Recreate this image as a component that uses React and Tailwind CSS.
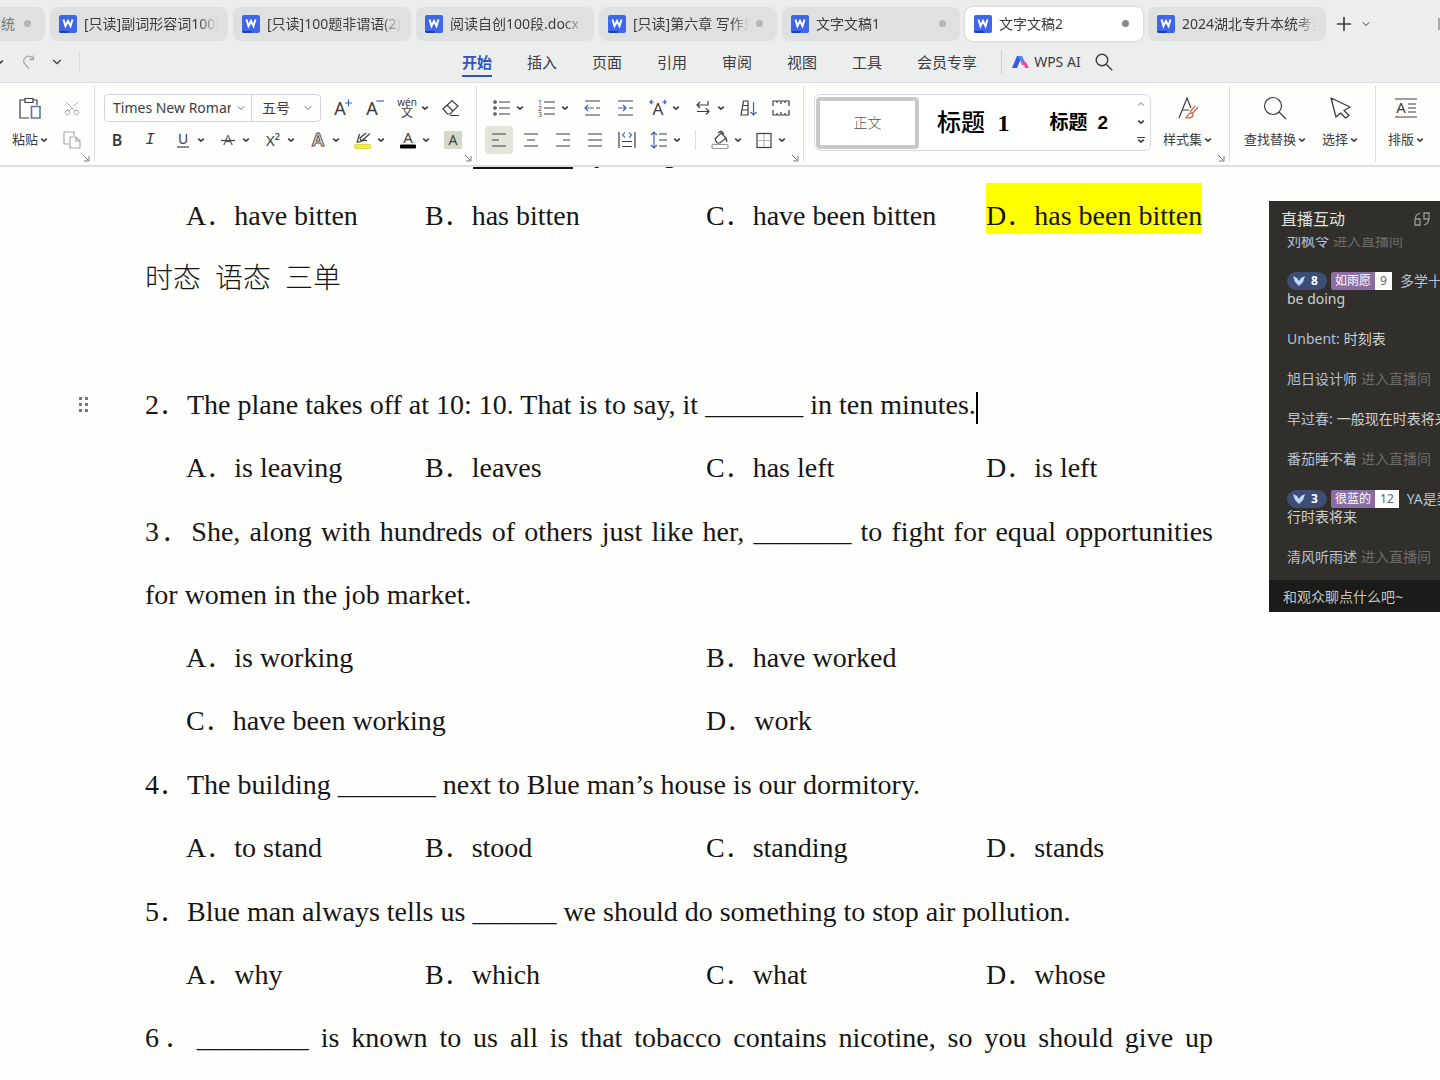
import React from 'react';
import { ChevronDown, Plus, Search, Scissors } from 'lucide-react';
import clsx from 'clsx';

const tabs = [
  { title: '[只读]副词形容词100题' },
  { title: '[只读]100题非谓语(2)' },
  { title: '阅读自创100段.docx' },
  { title: '[只读]第六章 写作思路', dirty: true },
  { title: '文字文稿1', dirty: true },
  { title: '文字文稿2', dirty: true, active: true },
  { title: '2024湖北专升本统考英语' },
];

const menus = ['开始', '插入', '页面', '引用', '审阅', '视图', '工具', '会员专享'];

const questions = [
  {
    text: '2．The plane takes off at 10: 10. That is to say, it _______ in ten minutes.',
    options: ['A．is leaving', 'B．leaves', 'C．has left', 'D．is left'],
    current: true,
  },
  {
    text: '3．She, along with hundreds of others just like her, _______ to fight for equal opportunities for women in the job market.',
    options: ['A．is working', 'B．have worked', 'C．have been working', 'D．work'],
    wide: true,
  },
  {
    text: '4．The building _______ next to Blue man’s house is our dormitory.',
    options: ['A．to stand', 'B．stood', 'C．standing', 'D．stands'],
  },
  {
    text: '5．Blue man always tells us ______ we should do something to stop air pollution.',
    options: ['A．why', 'B．which', 'C．what', 'D．whose'],
  },
];

const messages = [
  { name: '刘枫令', enter: true },
  { level: 8, fan: '如雨愿', fanLevel: 9, name: '多学十', body: 'be doing' },
  { name: 'Unbent:', text: '时刻表' },
  { name: '旭日设计师', enter: true },
  { name: '早过春:', text: '一般现在时表将来' },
  { name: '番茄睡不着', enter: true },
  { level: 3, fan: '很蓝的', fanLevel: 12, name: 'YA是梨', body: '行时表将来' },
  { name: '清风听雨述', enter: true },
];

const Caret = ({ className }) => (
  <svg viewBox="0 0 8 6" className={clsx('w-2 h-1.5 shrink-0', className)} fill="none" stroke="currentColor" strokeWidth="1.6">
    <path d="M1.2 1.6 4 4.2 6.800 1.6" />
  </svg>
);

const Icon = ({ children, className }) => (
  <svg viewBox="0 0 20 20" className={clsx('w-5 h-5 shrink-0', className)} fill="none" stroke="currentColor" strokeWidth="1.2">
    {children}
  </svg>
);

const Letter = ({ x = 10, y = 16, size = 16, children, ...rest }) => (
  <text x={x} y={y} fontSize={size} textAnchor="middle" fill="currentColor" stroke="none" {...rest}>{children}</text>
);

const Tool = ({ label, caret, on, children }) => (
  <button aria-label={label} className="flex items-center gap-1 h-8 relative">
    {on && <span className="absolute -inset-x-1 inset-y-0.5 rounded-sm bg-[#e3e5da]"></span>}
    <span className="relative flex w-5 justify-center">{children}</span>
    {caret && <Caret />}
  </button>
);

const BigTool = ({ label, icon }) => (
  <button className="flex flex-col items-center shrink-0">
    <span className="h-8 flex items-center">{icon}</span>
    <span className="h-8 flex items-center gap-0.5 text-[13px] whitespace-nowrap">{label}<Caret /></span>
  </button>
);

const Launcher = () => (
  <button aria-label="更多设置" className="absolute right-1 bottom-0 text-[#777]">
    <svg viewBox="0 0 8 8" className="w-2 h-2" fill="none" stroke="currentColor" strokeWidth="1"><path d="M1 1l5 5M7 2v5H2" /></svg>
  </button>
);

const Group = ({ className, children }) => (
  <div className={clsx('relative shrink-0 border-r border-[#dedee0] pt-1.5 my-[3px]', className)}>{children}</div>
);

const WLogo = () => (
  <svg viewBox="0 0 18 18" className="w-[18px] h-[18px] shrink-0" aria-hidden="true">
    <rect width="18" height="18" rx="2" fill="#3f66e8" />
    <path d="M0 16h10l-1 2H2a2 2 0 0 1-2-2z" fill="#1c3fae" />
    <path d="M4.500 4.500 6.500 11 9 6l2.500 5L13.500 4.500" fill="none" stroke="#fff" strokeWidth="2" />
  </svg>
);

const Tab = ({ title, dirty, active }) => (
  <button className={clsx('flex items-center h-[34px] w-[178px] shrink-0 rounded-lg pl-[9px] text-sm', active ? 'bg-white shadow-[0_0_2px_1px_#d8d8dc]' : 'bg-[#dfe0e0]')}>
    <WLogo />
    <span className={clsx('ml-[7px] text-left whitespace-nowrap overflow-hidden [mask-image:linear-gradient(to_right,black_85%,transparent)]', dirty ? 'w-[116px]' : 'w-[134px]')}>{title}</span>
    {dirty && <span className={clsx('ml-[7px] w-[7px] h-[7px] rounded-full', active ? 'bg-[#8a8a8a]' : 'bg-[#b5b5b8]')}></span>}
  </button>
);

const TabBar = () => (
  <div className="flex items-center gap-[5px] h-[47px] overflow-hidden">
    <button className="flex items-center justify-end h-[34px] w-[45px] shrink-0 overflow-hidden rounded-r-lg bg-[#dfe0e0] pr-[14px] text-sm whitespace-nowrap text-[#777]">
      本统<span className="ml-[9px] w-[7px] h-[7px] shrink-0 rounded-full bg-[#b5b5b8]"></span>
    </button>
    {tabs.map((t) => <Tab key={t.title} {...t} />)}
    <button aria-label="新建" className="ml-0.5 shrink-0"><Plus size={22} strokeWidth={1.8} /></button>
    <button aria-label="标签列表" className="shrink-0"><ChevronDown size={12} /></button>
    <span className="ml-auto w-0.5 h-3 bg-[#aaa]"></span>
  </div>
);

const MenuBar = () => (
  <div className="flex items-center h-9 pb-[5px] text-[15px] border-b border-[#dcdcde]">
    <div className="flex items-center w-[462px] shrink-0">
      <Caret className="-ml-1" />
      <button aria-label="重做" className="ml-[17px] text-[#aaa]">
        <svg viewBox="0 0 14 16" className="w-3.5 h-4" fill="none" stroke="currentColor" strokeWidth="1.3"><path d="M12.5 1.5v4H8.5M12.3 5.3A5 5 0 1 0 3 9l5 5.5" /></svg>
      </button>
      <button aria-label="更多" className="ml-[15px]"><ChevronDown size={14} /></button>
      <span className="ml-[15px] w-px h-5 bg-[#dcdce0]"></span>
    </div>
    <nav className="flex gap-[35px] shrink-0">
      {menus.map((m, i) => (
        <button key={m} className={clsx('relative whitespace-nowrap', i === 0 && 'font-bold text-[#3553b5]')}>
          {m}
          {i === 0 && <span className="absolute inset-x-0 -bottom-1 h-0.5 bg-[#3553b5]"></span>}
        </button>
      ))}
    </nav>
    <span className="ml-6 mr-2.5 w-px h-6 bg-[#cfcfd2]"></span>
    <button className="flex items-center gap-1 text-sm whitespace-nowrap">
      <svg viewBox="0 0 18 14" className="w-[18px] h-3.5" aria-hidden="true">
        <path d="M0 13 5 1h5L5 13z" fill="#3a5be0" />
        <path d="M6 1h4l3 6H9z" fill="#4b8df0" />
        <path d="M9 7h5l3 6h-4l-1-3h-2z" fill="#e84f98" />
      </svg>
      WPS AI
    </button>
    <button aria-label="搜索" className="ml-3.5">
      <svg viewBox="0 0 18 18" className="w-[18px] h-[18px]" fill="none" stroke="currentColor" strokeWidth="1.4"><circle cx="7" cy="7" r="5.800" /><path d="m11.200 11.200 6 6" /></svg>
    </button>
  </div>
);

const FontGroup = () => (
  <Group className="w-[382px]">
    <div className="flex items-center gap-3 h-8 pl-[9px]">
      <div className="flex h-7 w-[217px] border border-[#d4d4d8] rounded-[4px] text-sm">
        <label className="relative flex w-[147px] items-center border-r border-[#d4d4d8]">
          <select aria-label="字体" className="appearance-none w-full pl-2 pr-5 outline-none text-sm">
            <option>Times New Romar</option>
          </select>
          <ChevronDown size={12} strokeWidth={1.5} className="absolute right-1 pointer-events-none" />
        </label>
        <label className="relative flex flex-1 items-center">
          <select aria-label="字号" className="appearance-none w-full pl-2.5 outline-none text-sm">
            <option>五号</option>
          </select>
          <ChevronDown size={12} strokeWidth={1.5} className="absolute right-1.5 pointer-events-none" />
        </label>
      </div>
      <Tool label="增大字号"><Icon><Letter x={7} y={17} size={18}>A</Letter><path d="M12 5h7M15.500 1.500v7" stroke="#3b62c9" /></Icon></Tool>
      <Tool label="减小字号"><Icon><Letter x={7} y={17} size={18}>A</Letter><path d="M11.500 3h7.500" stroke="#3b62c9" /></Icon></Tool>
      <Tool label="拼音指南" caret><Icon className="overflow-visible"><Letter y={8} size={10}>wén</Letter><Letter y={19} size={12}>文</Letter></Icon></Tool>
      <Tool label="清除格式"><Icon><path d="M2 11 11 2.5l6 5.5-8 8H6.5zM6 7l6 6M9 17.5h9" /></Icon></Tool>
    </div>
    <div className="flex items-center gap-[13px] h-8 pl-3">
      <Tool label="加粗"><span className="text-base font-semibold">B</span></Tool>
      <Tool label="倾斜"><span className="text-base italic font-['Liberation_Mono']">I</span></Tool>
      <Tool label="下划线" caret><Icon><Letter y={14} size={14}>U</Letter><path d="M4 17h12" /></Icon></Tool>
      <Tool label="删除线" caret><Icon><Letter y={15} size={15} opacity="0.75">A</Letter><path d="M3 10.5h14" /></Icon></Tool>
      <Tool label="上标" caret><span className="text-[15px]">X²</span></Tool>
      <Tool label="文字效果" caret><Icon><text x="10" y="16" fontSize="18" fontWeight="600" textAnchor="middle" fill="#f6e2da" stroke="#555" strokeWidth="1">A</text></Icon></Tool>
      <Tool label="突出显示" caret><Icon><path d="M4 12.500 6.500 4M4 12.500l4-1 9-8M8 11l-1-3 6-5M9 11l3-1 2 1" /><rect x="1.5" y="14.5" width="16" height="4" rx="1" fill="#f7f021" stroke="#c7c233" strokeWidth="0.6" /></Icon></Tool>
      <Tool label="字体颜色" caret><Icon><Letter y={13} size={15}>A</Letter><rect x="2" y="14.5" width="16" height="4" rx="1" fill="#000" stroke="none" /></Icon></Tool>
      <Tool label="字符底纹"><span className="w-[18px] h-[18px] bg-[#d3d8cb] text-sm leading-[18px]">A</span></Tool>
    </div>
    <Launcher />
  </Group>
);

const ParagraphGroup = () => (
  <Group className="w-[327px]">
    <div className="flex items-center gap-[13px] h-8 pl-[15px]">
      <Tool label="项目符号" caret><Icon><path d="M7 4h11M7 10h11M7 16h11" /><circle cx="3" cy="4" r="1.2" /><circle cx="3" cy="10" r="1.2" /><circle cx="3" cy="16" r="1.2" /></Icon></Tool>
      <Tool label="编号" caret><Icon><path d="M7 4h11M7 10h11M7 16h11" /><Letter x={3} y={6.5} size={7}>1</Letter><Letter x={3} y={12.5} size={7}>2</Letter><Letter x={3} y={18.5} size={7}>3</Letter></Icon></Tool>
      <Tool label="减少缩进"><Icon><path d="M3 3h15M3 17h15M14 10h4" /><path d="M12 10H3M6 7l-3 3 3 3" stroke="#3b62c9" /></Icon></Tool>
      <Tool label="增加缩进"><Icon><path d="M3 3h15M3 17h15M14 10h4" /><path d="M3 10h8M8 7l3 3-3 3" stroke="#3b62c9" /></Icon></Tool>
      <Tool label="字符缩放" caret><Icon><Letter y={17} size={17}>A</Letter><path d="M6 4H2M4 2 2 4l2 2M14 4h4M16 2l2 2-2 2" stroke="#3b62c9" /></Icon></Tool>
      <Tool label="换行符" caret><Icon><path d="M15 3v4H4M7 4 4 7l3 3M4 13.5h12M13 10.5l3 3-3 3" /></Icon></Tool>
      <Tool label="排序"><Icon><path d="M3 17 5.500 3H10v14zM4 12h6M5 7.500h5" /><path d="M15.500 4v13M12.500 14l3 3 3-3" stroke="#3b62c9" /></Icon></Tool>
      <Tool label="制表位"><Icon><path d="M2 8V3h16v5M2 12v5h16v-5M6 3v2M10 3v3M14 3v2M6 17v-2M10 17v-3M14 17v-2" /></Icon></Tool>
    </div>
    <div className="flex items-center gap-3 h-8 pl-3">
      <Tool label="左对齐" on><Icon><path d="M3 4h14M3 10h7M3 16h14" /></Icon></Tool>
      <Tool label="居中"><Icon><path d="M3 4h14M6 10h8M3 16h14" /></Icon></Tool>
      <Tool label="右对齐"><Icon><path d="M3 4h14M10 10h7M3 16h14" /></Icon></Tool>
      <Tool label="两端对齐"><Icon><path d="M3 4h14M3 10h14M3 16h14" /></Icon></Tool>
      <Tool label="分散对齐"><Icon><path d="M2 2v16M18 2v16M5 11.500h10M5 16.500h10" /><path d="M8 2.500 5.500 5 8 7.500M12 2.500 14.500 5 12 7.500" stroke="#5a6fb0" /></Icon></Tool>
      <Tool label="行距" caret><Icon><path d="M10 4h8M10 10h8M10 16h8" /><path d="M5 2v16M2 5l3-3 3 3M2 15l3 3 3-3" stroke="#3b62c9" /></Icon></Tool>
      <span className="mx-0.5 w-px h-5 bg-[#dedee0]"></span>
      <Tool label="底纹" caret><Icon><path d="M5 9 11 3l5 5-6 5H7zM8 3l3-2 3 3M16 8l1 4" /><rect x="2" y="14.500" width="16" height="4" rx="1" stroke="#999" /></Icon></Tool>
      <Tool label="边框" caret><Icon><rect x="3" y="3.500" width="14" height="14" /><path d="M10 4v13M3.500 10.500h13" stroke="#bbb" /></Icon></Tool>
    </div>
    <Launcher />
  </Group>
);

const StyleGroup = () => (
  <Group className="flex w-[426px]">
    <div className="flex items-center h-[57px] w-[337px] mt-0.5 ml-2.5 border border-[#dadade] rounded-md bg-white">
      <button className="ml-px w-[103px] h-[52px] shrink-0 border-4 border-[#c9c9cb] rounded-[4px] text-sm font-light text-[#555]">正文</button>
      <button className="ml-[18px] text-2xl font-medium whitespace-nowrap text-black">标题&nbsp; <span className="font-['Liberation_Serif'] font-bold">1</span></button>
      <button className="ml-10 text-[19px] font-bold whitespace-nowrap text-black">标题&nbsp; <span className="font-['Liberation_Sans']">2</span></button>
      <div className="ml-auto mr-[5px] flex flex-col gap-3">
        <button aria-label="上一行" className="rotate-180 text-[#bbb]"><Caret /></button>
        <button aria-label="下一行"><Caret /></button>
        <button aria-label="展开样式" className="border-t border-current"><Caret /></button>
      </div>
    </div>
    <div className="ml-3">
      <BigTool label="样式集" icon={
        <svg viewBox="0 0 24 24" className="w-6 h-6" fill="none" stroke="currentColor" strokeWidth="1.2">
          <path d="M3 22 11 2l4 10M6 14h7" />
          <path d="m22 11-6 7M19 10l-5 6M16 17c-3-1-4 2-6 5 4 0 7 0 7-3z" stroke="#c8674a" />
        </svg>
      } />
    </div>
    <Launcher />
  </Group>
);

const Ribbon = () => (
  <div className="flex h-[84px] overflow-hidden bg-[#fefefd] border-b-2 border-[#dddde2]">
    <Group className="flex w-[95px] pl-3">
      <BigTool label="粘贴" icon={
        <svg viewBox="0 0 24 24" className="w-6 h-6" fill="none" stroke="currentColor" strokeWidth="1.2">
          <path d="M7 4H2v18h9M15 4h4v5M7 2.500h8v4H7z" />
          <path d="M13.500 10.500h8.500v11.500h-8.500z" stroke="#5873b5" strokeWidth="1.6" />
        </svg>
      } />
      <div className="ml-3.5 flex flex-col text-[#aaa]">
        <Tool label="剪切"><Scissors size={18} strokeWidth={1.2} className="-rotate-90" /></Tool>
        <Tool label="复制"><Icon><path d="M7 14H2V2h10v4M8 7h6l4 4v7H8zM14 7v4h4" /></Icon></Tool>
      </div>
      <Launcher />
    </Group>
    <FontGroup />
    <ParagraphGroup />
    <StyleGroup />
    <Group className="flex gap-4 w-[146px] pl-3.5">
      <BigTool label="查找替换" icon={
        <svg viewBox="0 0 24 24" className="w-6 h-6" fill="none" stroke="currentColor" strokeWidth="1.2"><circle cx="10" cy="10" r="8.500" /><path d="m16 16 7 7" /></svg>
      } />
      <BigTool label="选择" icon={
        <svg viewBox="0 0 24 24" className="w-6 h-6" fill="none" stroke="currentColor" strokeWidth="1.3" strokeLinejoin="round"><path d="M3 2 22 11l-6 3.500 5 5-3.500 2.500-5-5L8 21z" /></svg>
      } />
    </Group>
    <div className="ml-3 pt-[9px] shrink-0">
      <BigTool label="排版" icon={
        <svg viewBox="0 0 24 24" className="w-6 h-6" fill="none" stroke="currentColor" strokeWidth="1.2">
          <path d="M1 3h22M1 21h22M14 8h8M14 12h8M14 16h8" />
          <Letter x={7} y={17} size={15}>A</Letter>
        </svg>
      } />
    </div>
  </div>
);

const Options = ({ items, wide, marked }) => (
  <ul className="grid grid-cols-[239px_281px_280px_1fr] pl-[41px]">
    {items.map((o) => (
      <li key={o} className={clsx('whitespace-nowrap', wide && 'col-span-2')}>
        <span className={clsx(o === marked && 'bg-[#ffff00] pt-[17px] pb-[3px]')}>{o}</span>
      </li>
    ))}
  </ul>
);

const Document = () => (
  <main className="flex-1 overflow-hidden bg-[#fefefc] pl-[145px] pr-[227px] text-[28px] leading-[63px] font-light text-[#151515] font-['Liberation_Serif','Noto_Sans_CJK_SC',serif]">
    <p className="flex gap-[7px] -mt-[46px] pl-[328px] whitespace-nowrap">
      <span className="w-[100px] h-12 border-b-2 border-current"></span>
      by a dog
    </p>
    <Options items={['A．have bitten', 'B．has bitten', 'C．have been bitten', 'D．has been bitten']} marked="D．has been bitten" />
    <p>时态&nbsp; 语态&nbsp; 三单</p>
    <p>&nbsp;</p>
    {questions.map((q) => (
      <section key={q.text} className="relative not-first-of-type:mt-px">
        {q.current && (
          <button aria-label="段落" className="absolute -left-[66px] top-6 grid grid-cols-2 gap-[3px]">
            {[...Array(6)].map((_, i) => <span key={i} className="w-[3px] h-[3px] bg-[#777]"></span>)}
          </button>
        )}
        <p className="text-justify">
          {q.text}
          {q.current && <span className="inline-block w-0.5 h-8 align-middle bg-black"></span>}
        </p>
        <Options items={q.options} wide={q.wide} />
      </section>
    ))}
    <p className="text-justify [text-align-last:justify]">6．________ is known to us all is that tobacco contains nicotine, so you should give up</p>
  </main>
);

const Message = ({ level, fan, fanLevel, name, text, enter, body }) => (
  <li className="text-[#cfd0cd]">
    <div className="flex items-center h-[18px] whitespace-nowrap">
      {level && (
        <>
          <span className="flex items-center gap-1.5 h-[18px] w-10 shrink-0 pl-1.5 rounded-full bg-[#3d4d73] text-xs font-bold text-white">
            <svg viewBox="0 0 12 10" className="w-3 h-2.5" fill="#bcd8ff"><path d="M0 0l4 2 2 3 2-3 4-2-2 6-4 4-4-4z" /></svg>
            {level}
          </span>
          <span className="ml-1 h-[18px] px-1 bg-[#8a6ea3] text-xs leading-[18px] text-white rounded-l-xs">{fan}</span>
          <span className="mr-2 h-[18px] px-[5px] bg-white text-xs leading-[18px] text-[#666]">{fanLevel}</span>
        </>
      )}
      <span className="text-[#b3c1d6]">{name}</span>
      {text && <span className="ml-1">{text}</span>}
      {enter && <span className="ml-1 text-[#6c6c6a]">进入直播间</span>}
    </div>
    {body && <div>{body}</div>}
  </li>
);

const LiveChat = () => (
  <aside className="absolute right-0 top-[201px] w-[171px] overflow-hidden bg-[#302f2c] text-sm leading-[18px]">
    <header className="flex items-center justify-between h-9 pl-3 pr-2.5 text-base text-[#e0e0dc]">
      直播互动
      <svg viewBox="0 0 16 14" className="w-4 h-3.5" fill="none" stroke="#999" strokeWidth="1.3" aria-hidden="true">
        <path d="M6 1C3 2 1 4 1 8v5h5V7H1M10 13c3-1 5-3 5-7V1h-5v6h5" />
      </svg>
    </header>
    <div className="overflow-hidden">
      <ul className="-mt-[5px] flex flex-col gap-[22px] pl-[18px] pb-3.5">
        {messages.map((m) => <Message key={m.name} {...m} />)}
      </ul>
    </div>
    <input aria-label="聊天" placeholder="和观众聊点什么吧~" className="block w-full h-8 pl-3.5 bg-[#1b1b19] outline-none text-sm placeholder:text-[#c6c6c2]" />
  </aside>
);

export default function App() {
  return (
    <div className="relative flex flex-col h-screen overflow-hidden text-[#3c3c3e] font-['Noto_Sans','Noto_Sans_CJK_SC',sans-serif]">
      <div className="bg-[#eceded]">
        <TabBar />
        <MenuBar />
      </div>
      <Ribbon />
      <Document />
      <LiveChat />
    </div>
  );
}
